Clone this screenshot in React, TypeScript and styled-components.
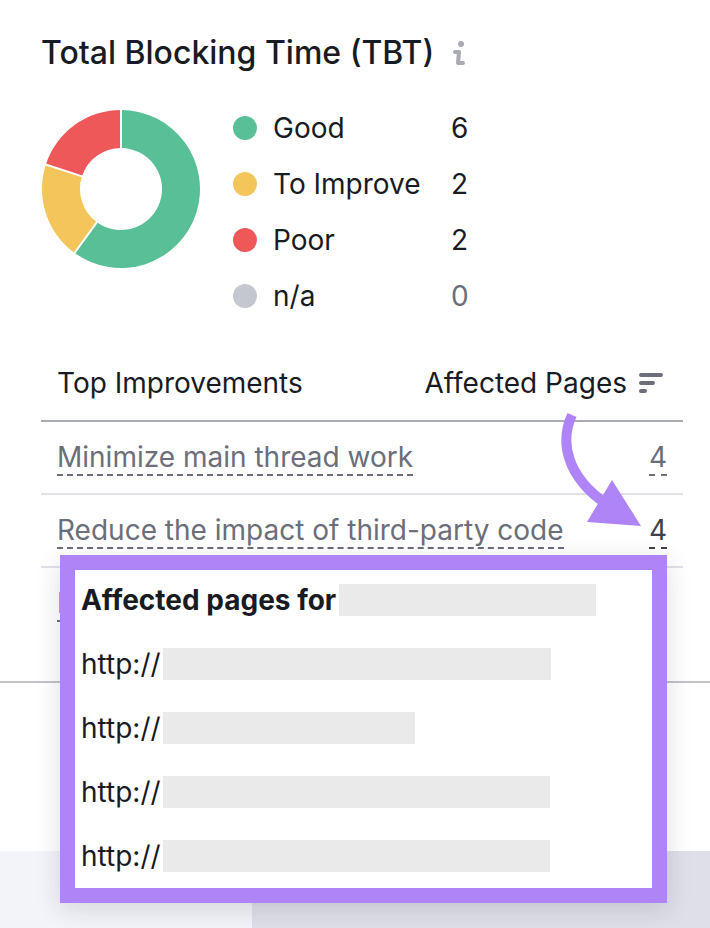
import React from 'react';
import styled, { createGlobalStyle } from 'styled-components';

const color = {
  text: '#191b23',
  muted: '#6c6e79',
  good: '#59bf97',
  improve: '#f4c55a',
  poor: '#ee5859',
  none: '#c4c7cf',
  accent: '#ae84f6',
  redacted: '#eaeaea',
};

const GlobalStyle = createGlobalStyle`
  * { box-sizing: border-box; }
  body {
    margin: 0;
    background: #fff;
    color: ${color.text};
    font-family: Inter, "Liberation Sans", sans-serif;
    font-size: 28px;
    line-height: 34px;
  }
`;

const Card = styled.section`
  padding: 33px 27px 40px 41px;
  border-bottom: 2px solid #c1c1c7;
`;

const TitleRow = styled.header`
  display: flex;
  align-items: center;
  gap: 18px;
`;

const Title = styled.h1`
  margin: 0;
  font-size: 32px;
  line-height: 40px;
  font-weight: 500;
`;

const IconButton = styled.button`
  display: flex;
  padding: 0;
  border: 0;
  background: none;
  cursor: pointer;
`;

const Summary = styled.div`
  display: flex;
  align-items: flex-start;
  gap: 32px;
  margin-top: 27px;
`;

const ChartBox = styled.div`
  display: flex;
  padding-top: 9px;
`;

const Legend = styled.dl`
  margin: 0;
`;

const LegendRow = styled.div`
  display: grid;
  grid-template-columns: 24px 162px auto;
  column-gap: 16px;
  align-items: center;
  height: 56px;
`;

const Dot = styled.span<{ $fill: string }>`
  width: 24px;
  height: 24px;
  border-radius: 50%;
  background: ${(p) => p.$fill};
`;

const LegendLabel = styled.dt``;

const LegendValue = styled.dd<{ $muted: boolean }>`
  margin: 0;
  color: ${(p) => (p.$muted ? color.muted : color.text)};
`;

const TableArea = styled.div`
  position: relative;
  margin-top: 21px;
`;

const Table = styled.table`
  width: 100%;
  table-layout: fixed;
  border-collapse: separate;
  border-spacing: 0;
  white-space: nowrap;
`;

const NameColumn = styled.col`
  width: 45%;
`;

const CountColumn = styled.col`
  width: 50px;
`;

const HeadCell = styled.th<{ $end?: boolean }>`
  padding: 21px ${(p) => (p.$end ? 20 : 16)}px 20px 16px;
  border-bottom: 2px solid #a9abb2;
  font-weight: 400;
  text-align: ${(p) => (p.$end ? 'right' : 'left')};
`;

const SortButton = styled.button`
  display: inline-flex;
  align-items: center;
  gap: 12px;
  padding: 0;
  border: 0;
  background: none;
  color: inherit;
  font: inherit;
  vertical-align: top;
  cursor: pointer;
`;

const Row = styled.tr`
  & > td { border-bottom: 2px solid #e0e1e9; }
  &:last-child > td { border-bottom-color: transparent; }
`;

const Cell = styled.td<{ $end?: boolean }>`
  padding: 18px 16px 17px;
  text-align: ${(p) => (p.$end ? 'right' : 'left')};
`;

const HintButton = styled.button<{ $active?: boolean }>`
  display: inline-block;
  padding: 0;
  border: 0;
  border-bottom: 2px dashed currentColor;
  background: none;
  color: ${(p) => (p.$active ? '#3f414b' : color.muted)};
  font: inherit;
  vertical-align: top;
  white-space: nowrap;
  cursor: pointer;
`;

const Popover = styled.div`
  position: absolute;
  top: 210px;
  left: 19px;
  right: 16px;
  padding: 14px 6px 16px;
  display: grid;
  gap: 32px;
  border: 15px solid ${color.accent};
  background: #fff;
  line-height: 32px;
  box-shadow: 0 6px 24px rgba(25, 27, 35, 0.14);
`;

const PopoverTitle = styled.h2`
  display: flex;
  gap: 3px;
  margin: 0;
  font-size: 28px;
  font-weight: 700;
  white-space: nowrap;
`;

const UrlList = styled.ul`
  display: grid;
  gap: 32px;
  margin: 0;
  padding: 0;
  list-style: none;
`;

const UrlItem = styled.li`
  display: flex;
  gap: 2px;
`;

const Redacted = styled.span<{ $width: number }>`
  flex: 0 1 ${(p) => p.$width}px;
  height: 32px;
  background: ${color.redacted};
`;

const Arrow = styled.svg`
  position: absolute;
  top: 66px;
  right: 40px;
`;

const Gap = styled.div`
  height: 168px;
`;

const Footer = styled.footer`
  display: grid;
  grid-template-columns: 252px 1fr;
  height: 77px;
`;

const FooterPane = styled.div<{ $fill: string }>`
  background: ${(p) => p.$fill};
`;

const stats = [
  { label: 'Good', value: 6, fill: color.good },
  { label: 'To Improve', value: 2, fill: color.improve },
  { label: 'Poor', value: 2, fill: color.poor },
  { label: 'n/a', value: 0, fill: color.none },
];

const improvements = [
  { name: 'Minimize main thread work', pages: 4 },
  { name: 'Reduce the impact of third-party code', pages: 4, active: true },
  { name: 'Reduce unused JavaScript', pages: 4 },
];

const urlWidths = [388, 252, 387, 387];

const polar = (r: number, share: number) => {
  const a = share * 2 * Math.PI - Math.PI / 2;
  return `${80 + r * Math.cos(a)} ${80 + r * Math.sin(a)}`;
};

function Donut() {
  const total = stats.reduce((sum, s) => sum + s.value, 0);
  let from = 0;
  const slices = stats.filter((s) => s.value > 0).map((s) => {
    const start = from;
    const end = (from += s.value / total);
    const large = end - start > 0.5 ? 1 : 0;
    return {
      fill: s.fill,
      start,
      d: `M${polar(79, start)}A79 79 0 ${large} 1 ${polar(79, end)}L${polar(41, end)}A41 41 0 ${large} 0 ${polar(41, start)}Z`,
    };
  });
  return (
    <svg width="160" height="160" viewBox="0 0 160 160" role="img" aria-label="Total blocking time by page">
      {slices.map((s) => <path key={s.fill} d={s.d} fill={s.fill} />)}
      {slices.map((s) => (
        <path key={s.start} d={`M${polar(40, s.start)}L${polar(80, s.start)}`} stroke="#fff" strokeWidth="2" />
      ))}
    </svg>
  );
}

export default function App() {
  return (
    <>
      <GlobalStyle />
      <main>
        <Card>
          <TitleRow>
            <Title>Total Blocking Time (TBT)</Title>
            <IconButton type="button" aria-label="About this metric">
              <svg width="14" height="26" viewBox="0 0 14 26" fill="none" stroke="#a9abb2" strokeWidth="4" strokeLinecap="round" strokeLinejoin="round">
                <circle cx="9" cy="4" r="3" fill="#a9abb2" stroke="none" />
                <path d="M3 12H7L6 23H11" />
              </svg>
            </IconButton>
          </TitleRow>

          <Summary>
            <ChartBox><Donut /></ChartBox>
            <Legend>
              {stats.map((s) => (
                <LegendRow key={s.label}>
                  <Dot $fill={s.fill} />
                  <LegendLabel>{s.label}</LegendLabel>
                  <LegendValue $muted={s.value === 0}>{s.value}</LegendValue>
                </LegendRow>
              ))}
            </Legend>
          </Summary>

          <TableArea>
            <Table>
              <colgroup>
                <NameColumn />
                <col />
                <CountColumn />
              </colgroup>
              <thead>
                <tr>
                  <HeadCell scope="col">Top Improvements</HeadCell>
                  <HeadCell scope="col" colSpan={2} $end aria-sort="descending">
                    <SortButton type="button">
                      Affected Pages
                      <svg width="24" height="20" viewBox="0 0 24 20" stroke={color.muted} strokeWidth="4" strokeLinecap="round" aria-hidden="true">
                        <path d="M2 2H22M2 10H14M2 18H6" />
                      </svg>
                    </SortButton>
                  </HeadCell>
                </tr>
              </thead>
              <tbody>
                {improvements.map((item) => (
                  <Row key={item.name}>
                    <Cell colSpan={2}><HintButton type="button">{item.name}</HintButton></Cell>
                    <Cell $end><HintButton type="button" $active={item.active}>{item.pages}</HintButton></Cell>
                  </Row>
                ))}
              </tbody>
            </Table>

            <Popover role="dialog" aria-labelledby="affected-title">
              <PopoverTitle id="affected-title">
                Affected pages for
                <Redacted $width={257} />
              </PopoverTitle>
              <UrlList>
                {urlWidths.map((width, i) => (
                  <UrlItem key={i}>
                    http://
                    <Redacted $width={width} />
                  </UrlItem>
                ))}
              </UrlList>
            </Popover>

            <Arrow width="84" height="118" viewBox="0 0 84 118" aria-hidden="true">
              <path d="M13 4C0 32 9 66 46 92" fill="none" stroke={color.accent} strokeWidth="10" />
              <path d="M53 69L28 111L82 115Z" fill={color.accent} />
            </Arrow>
          </TableArea>
        </Card>
        <Gap />
        <Footer>
          <FooterPane $fill="#f3f4f9" />
          <FooterPane $fill="#dfdfe8" />
        </Footer>
      </main>
    </>
  );
}
